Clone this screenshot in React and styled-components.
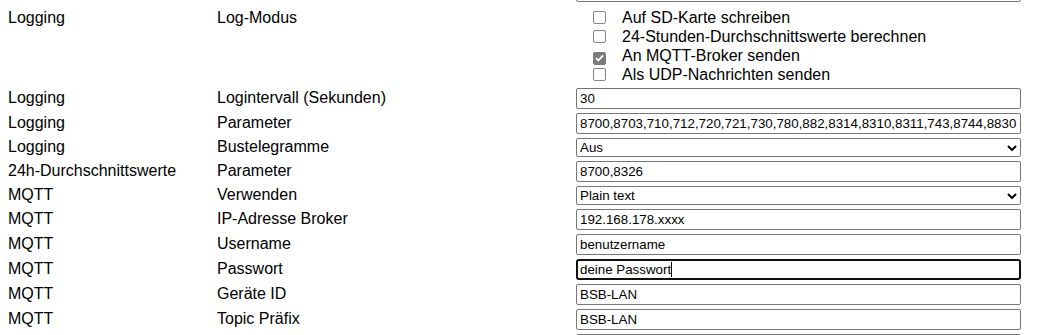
import React from "react";
import styled, { createGlobalStyle } from "styled-components";

const Global = createGlobalStyle`
  html, body { margin: 0; padding: 0; overflow: hidden; background: #fff; }
  body { font-family: "Liberation Sans", Arial, sans-serif; font-size: 16px; color: #000; }
`;

const Page = styled.div`
  display: flex;
  flex-direction: column;
  gap: 4px;
  margin-top: -19px;
  padding-left: 8px;
`;

const Row = styled.div`
  display: grid;
  grid-template-columns: 209px 359px 445px;
  align-items: baseline;
`;

const Label = styled.div`
  font-size: 16px;
  white-space: nowrap;
`;

const Field = styled.div`
  position: relative;
  display: flex;
  width: 445px;
`;

const TextInput = styled.input`
  box-sizing: border-box;
  width: 100%;
  height: 21px;
  margin: 0;
  padding: ${(p) => (p.$focused ? "1px 2px" : "2px 3px")};
  border: ${(p) => (p.$focused ? "2px solid #101010" : "1px solid #767676")};
  border-radius: ${(p) => (p.$focused ? "3px" : "2px")};
  font-family: "Liberation Sans", Arial, sans-serif;
  font-size: 13.333px;
  color: #000;
  background: #fff;
  outline: none;
`;

const Caret = styled.span`
  position: absolute;
  left: ${(p) => p.$x}px;
  top: 3px;
  width: 1px;
  height: 15px;
  background: #000;
`;

const Select = styled.select`
  box-sizing: border-box;
  width: 100%;
  height: 19px;
  margin: 0;
  padding: 0 0 0 3px;
  border: 1px solid #767676;
  border-radius: 2px;
  font-family: "Liberation Sans", Arial, sans-serif;
  font-size: 13.333px;
  color: #000;
  background: #fff;
  appearance: none;
  -webkit-appearance: none;
  outline: none;
`;

const Chevron = styled.svg`
  position: absolute;
  right: 4px;
  top: 7px;
  pointer-events: none;
`;

const CheckList = styled.div`
  display: flex;
  flex-direction: column;
  padding-top: 2px;
`;

const CheckRow = styled.div`
  display: flex;
  align-items: baseline;
  line-height: 19px;
  height: 19px;
  padding-left: 17px;
`;

const Box = styled.span`
  box-sizing: border-box;
  width: 13px;
  height: 13px;
  flex: none;
  display: flex;
  align-items: center;
  justify-content: center;
  border: 1px solid ${(p) => (p.$checked ? "#7c7c7c" : "#858585")};
  border-radius: 2px;
  background: ${(p) => (p.$checked ? "#7c7c7c" : "#fff")};
  margin-right: 16px;
  position: relative;
  top: 1px;
`;

const CheckText = styled.span`
  font-size: 16px;
  white-space: nowrap;
`;

function Checkbox({ checked, children }) {
  return (
    <CheckRow>
      <Box $checked={checked}>
        {checked && (
          <svg width="9" height="8" viewBox="0 0 9 8">
            <polyline points="1,4.2 3.4,6.5 8,1.3" fill="none" stroke="#fff" strokeWidth="1.8" />
          </svg>
        )}
      </Box>
      <CheckText>{children}</CheckText>
    </CheckRow>
  );
}

function InputField({ value, focused, caretX }) {
  return (
    <Field>
      <TextInput type="text" value={value} readOnly $focused={focused} />
      {focused && <Caret $x={caretX} />}
    </Field>
  );
}

function SelectField({ value }) {
  return (
    <Field>
      <Select value={value} onChange={() => {}}>
        <option value={value}>{value}</option>
      </Select>
      <Chevron width="10" height="6" viewBox="0 0 10 6">
        <polyline points="1,1 5,5 9,1" fill="none" stroke="#000" strokeWidth="2" />
      </Chevron>
    </Field>
  );
}

const rows = [
  { a: "Logging", b: "Logintervall (Sekunden)", kind: "input", v: "30" },
  {
    a: "Logging",
    b: "Parameter",
    kind: "input",
    v: "8700,8703,710,712,720,721,730,780,882,8314,8310,8311,743,8744,8830",
  },
  { a: "Logging", b: "Bustelegramme", kind: "select", v: "Aus" },
  { a: "24h-Durchschnittswerte", b: "Parameter", kind: "input", v: "8700,8326" },
  { a: "MQTT", b: "Verwenden", kind: "select", v: "Plain text" },
  { a: "MQTT", b: "IP-Adresse Broker", kind: "input", v: "192.168.178.xxxx" },
  { a: "MQTT", b: "Username", kind: "input", v: "benutzername" },
  { a: "MQTT", b: "Passwort", kind: "input", v: "deine Passwort", focused: true },
  { a: "MQTT", b: "Geräte ID", kind: "input", v: "BSB-LAN" },
  { a: "MQTT", b: "Topic Präfix", kind: "input", v: "BSB-LAN" },
];

export default function App() {
  return (
    <>
      <Global />
      <Page>
        <Row>
          <Label />
          <Label />
          <InputField value="" />
        </Row>
        <Row>
          <Label>Logging</Label>
          <Label>Log-Modus</Label>
          <CheckList>
            <Checkbox>Auf SD-Karte schreiben</Checkbox>
            <Checkbox>24-Stunden-Durchschnittswerte berechnen</Checkbox>
            <Checkbox checked>An MQTT-Broker senden</Checkbox>
            <Checkbox>Als UDP-Nachrichten senden</Checkbox>
          </CheckList>
        </Row>
        {rows.map((r, i) => (
          <Row key={i}>
            <Label>{r.a}</Label>
            <Label>{r.b}</Label>
            {r.kind === "select" ? (
              <SelectField value={r.v} />
            ) : (
              <InputField value={r.v} focused={r.focused} caretX={95} />
            )}
          </Row>
        ))}
        <Row>
          <Label />
          <Label />
          <InputField value="" />
        </Row>
      </Page>
    </>
  );
}
